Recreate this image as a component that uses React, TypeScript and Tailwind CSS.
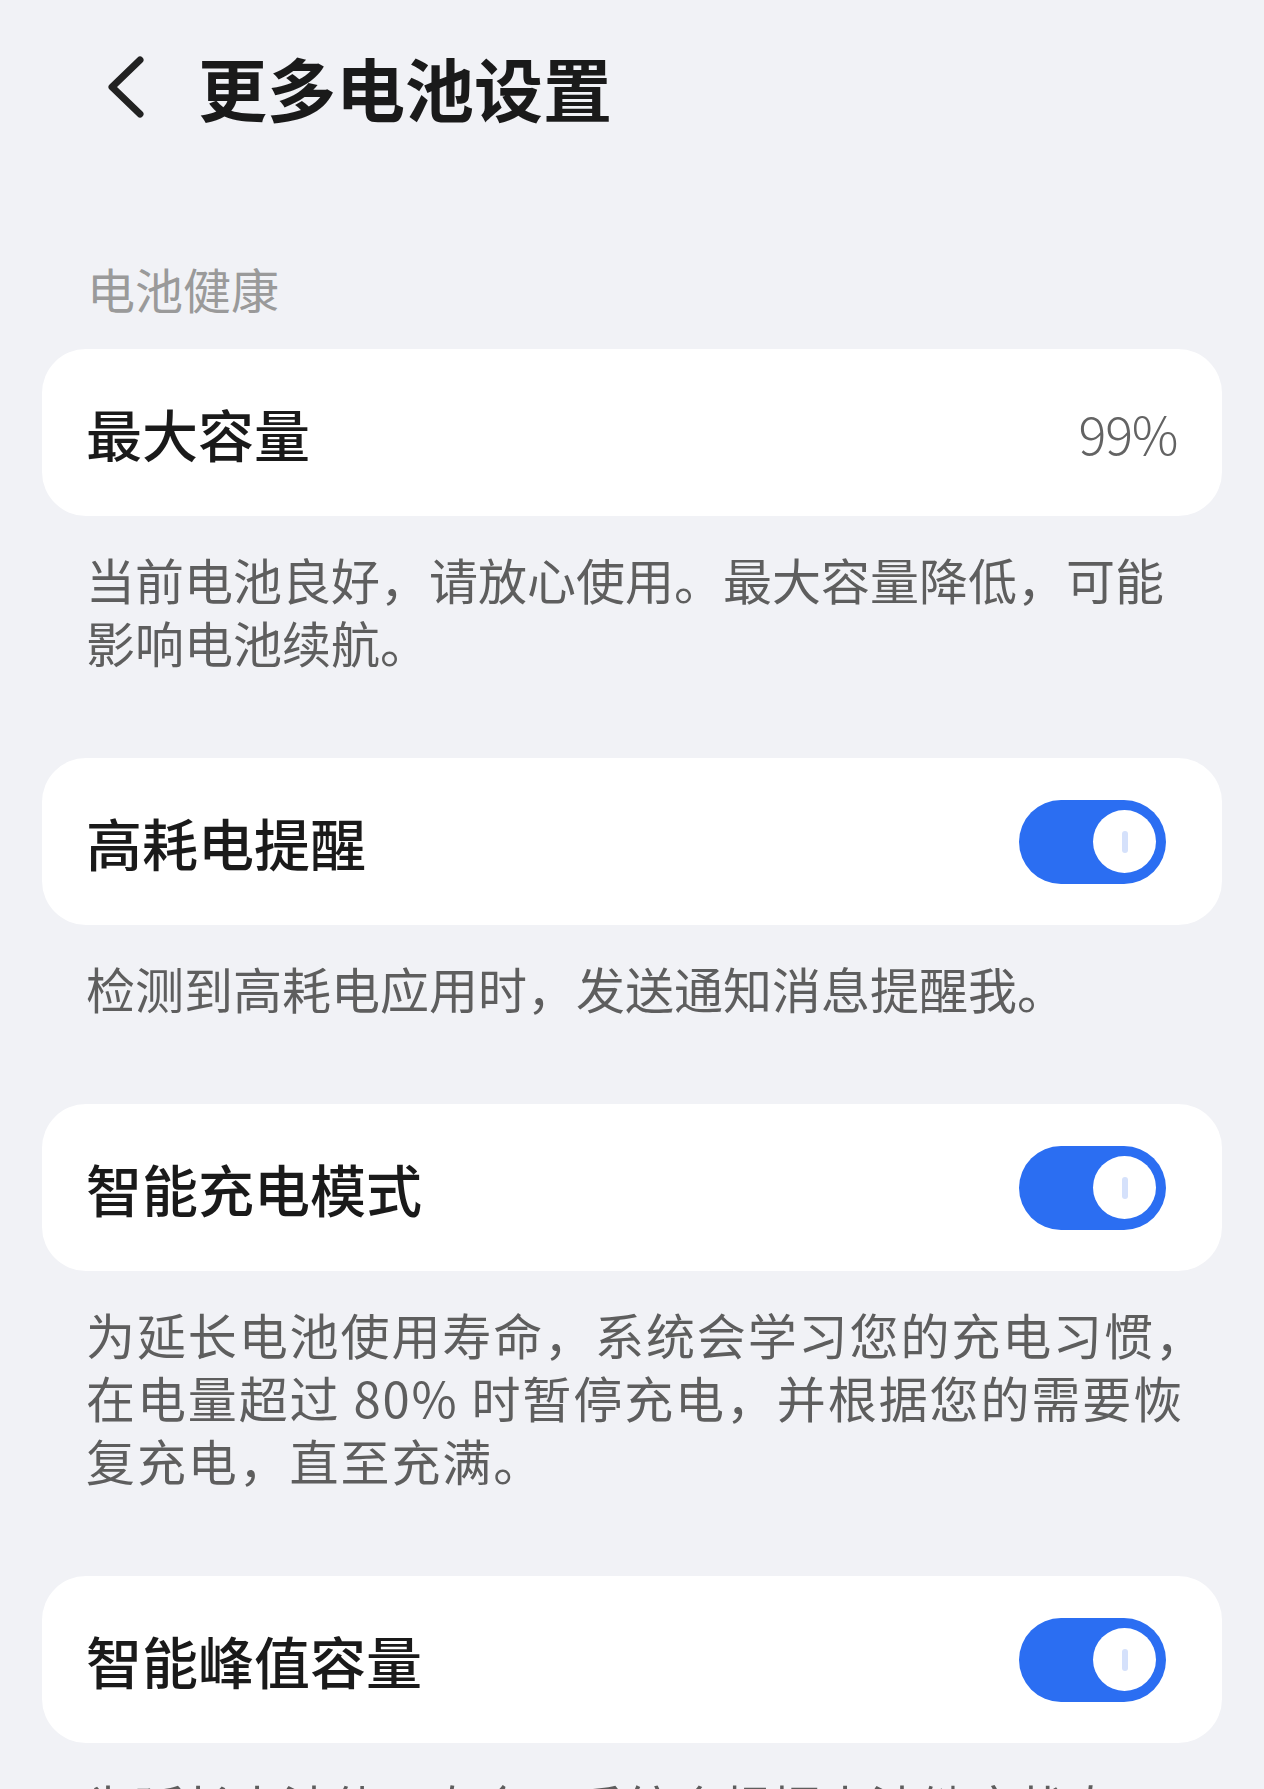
import React from 'react'

const font = { fontFamily: '"Noto Sans CJK SC", "Noto Sans", sans-serif' }

const Toggle = () => (
  <div className="flex h-[84px] w-[147px] shrink-0 items-center justify-end rounded-full bg-[#2b6ef2] pr-[10px]">
    <div className="flex h-[63px] w-[63px] items-center justify-center rounded-full bg-white">
      <div className="h-[22px] w-[6px] rounded-full bg-[#d5e1fb]" />
    </div>
  </div>
)

const Card = ({ label, right, pr }: { label: string; right: React.ReactNode; pr: string }) => (
  <div className={`flex h-[167px] items-center justify-between rounded-[44px] bg-white pl-[44px] ${pr}`}>
    <span className="text-[56px] font-medium leading-none text-[#1a1a1a]">{label}</span>
    {right}
  </div>
)

const Desc = ({ lines, wide }: { lines: string[]; wide?: boolean }) => (
  <div
    className={`mx-[44px] mb-[85px] mt-[31px] whitespace-nowrap text-[49px] leading-[63px] text-[#5e5e5e] ${
      wide ? 'tracking-[1.9px]' : ''
    }`}
  >
    {lines.map((l) => (
      <div key={l}>{l}</div>
    ))}
  </div>
)

const App = () => {
  return (
    <div className="h-[1789px] w-[1264px] overflow-hidden bg-[#f1f2f6]" style={font}>
      <div className="flex h-[174px] items-center pl-[105px]">
        <svg width="40" height="62" viewBox="0 0 40 62" fill="none">
          <path d="M35 4 L7 31 L35 58" stroke="#222" strokeWidth="7" strokeLinecap="round" strokeLinejoin="round" />
        </svg>
        <h1 className="ml-[53px] text-[69px] font-bold leading-none text-[#1a1a1a]">更多电池设置</h1>
      </div>

      <div className="ml-[87px] mt-[84px] text-[48px] leading-[60px] text-[#9a9a9a]">电池健康</div>

      <div className="mt-[31px] px-[42px]">
        <Card
          label="最大容量"
          pr="pr-[45px]"
          right={<span className="text-[52px] font-light leading-none tracking-tight text-[#636363]">99%</span>}
        />
        <Desc lines={['当前电池良好，请放心使用。最大容量降低，可能', '影响电池续航。']} />

        <Card label="高耗电提醒" pr="pr-[56px]" right={<Toggle />} />
        <Desc lines={['检测到高耗电应用时，发送通知消息提醒我。']} />

        <Card label="智能充电模式" pr="pr-[56px]" right={<Toggle />} />
        <Desc
          wide
          lines={[
            '为延长电池使用寿命，系统会学习您的充电习惯，',
            '在电量超过 80% 时暂停充电，并根据您的需要恢',
            '复充电，直至充满。',
          ]}
        />

        <Card label="智能峰值容量" pr="pr-[56px]" right={<Toggle />} />
        <Desc lines={['为延长电池使用寿命，系统会根据电池健康状态，']} />
      </div>
    </div>
  )
}

export default App
